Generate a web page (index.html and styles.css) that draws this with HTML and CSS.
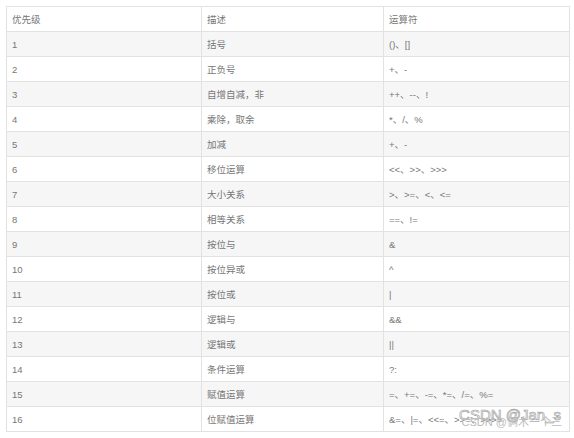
FILE: index.html
```html
<!DOCTYPE html>
<html lang="zh">
<head>
<meta charset="utf-8">
<link rel="stylesheet" href="styles.css">
</head>
<body>
<div class="wrap">
<table class="ops">
<thead>
<tr><th class="c1">优先级</th><th class="c2">描述</th><th class="c3">运算符</th></tr>
</thead>
<tbody>
<tr><td>1</td><td>括号</td><td>()、[]</td></tr>
<tr><td>2</td><td>正负号</td><td>+、-</td></tr>
<tr><td>3</td><td>自增自减，非</td><td>++、--、!</td></tr>
<tr><td>4</td><td>乘除，取余</td><td>*、/、%</td></tr>
<tr><td>5</td><td>加减</td><td>+、-</td></tr>
<tr><td>6</td><td>移位运算</td><td>&lt;&lt;、&gt;&gt;、&gt;&gt;&gt;</td></tr>
<tr><td>7</td><td>大小关系</td><td>&gt;、&gt;=、&lt;、&lt;=</td></tr>
<tr><td>8</td><td>相等关系</td><td>==、!=</td></tr>
<tr><td>9</td><td>按位与</td><td>&amp;</td></tr>
<tr><td>10</td><td>按位异或</td><td>^</td></tr>
<tr><td>11</td><td>按位或</td><td>|</td></tr>
<tr><td>12</td><td>逻辑与</td><td>&amp;&amp;</td></tr>
<tr><td>13</td><td>逻辑或</td><td>||</td></tr>
<tr><td>14</td><td>条件运算</td><td>?:</td></tr>
<tr><td>15</td><td>赋值运算</td><td>=、+=、-=、*=、/=、%=</td></tr>
<tr><td>16</td><td>位赋值运算</td><td>&amp;=、|=、&lt;&lt;=、&gt;&gt;=、&gt;&gt;&gt;=</td></tr>
</tbody>
</table>
<div class="wm">
<span class="wm-big">CSDN @Jan_s</span>
<span class="wm-small">CSDN @俩木一个三</span>
</div>
</div>
</body>
</html>
```
FILE: styles.css
```css
html, body {
  margin: 0;
  padding: 0;
  background: #fff;
}
body {
  font-family: "Liberation Sans", "Noto Sans CJK SC", sans-serif;
  color: #777;
}
.wrap {
  position: relative;
  padding: 6px 0 0 6px;
  width: 564px;
}
.ops {
  border-collapse: collapse;
  width: 564px;
  table-layout: fixed;
  font-size: 9.5px;
}
.ops th, .ops td {
  border: 1px solid #e2e2e2;
  height: 24px;
  padding: 0 0 0 5px;
  text-align: left;
  font-weight: normal;
  vertical-align: middle;
  white-space: nowrap;
  overflow: hidden;
}
.c1 { width: 189px; }
.c2 { width: 176px; }
.ops tbody tr:nth-child(odd) td {
  background: #f6f6f6;
}
.wm {
  position: absolute;
  right: 8px;
  bottom: 4px;
  display: flex;
  flex-direction: column;
  align-items: flex-end;
  line-height: 1;
}
.wm-big {
  font-size: 15px;
  color: rgba(255,255,255,0.85);
  -webkit-text-stroke: 0.6px #999;
  margin-bottom: -5px;
  margin-right: 1px;
}
.wm-small {
  font-size: 11px;
  color: #bbb;
}
```
